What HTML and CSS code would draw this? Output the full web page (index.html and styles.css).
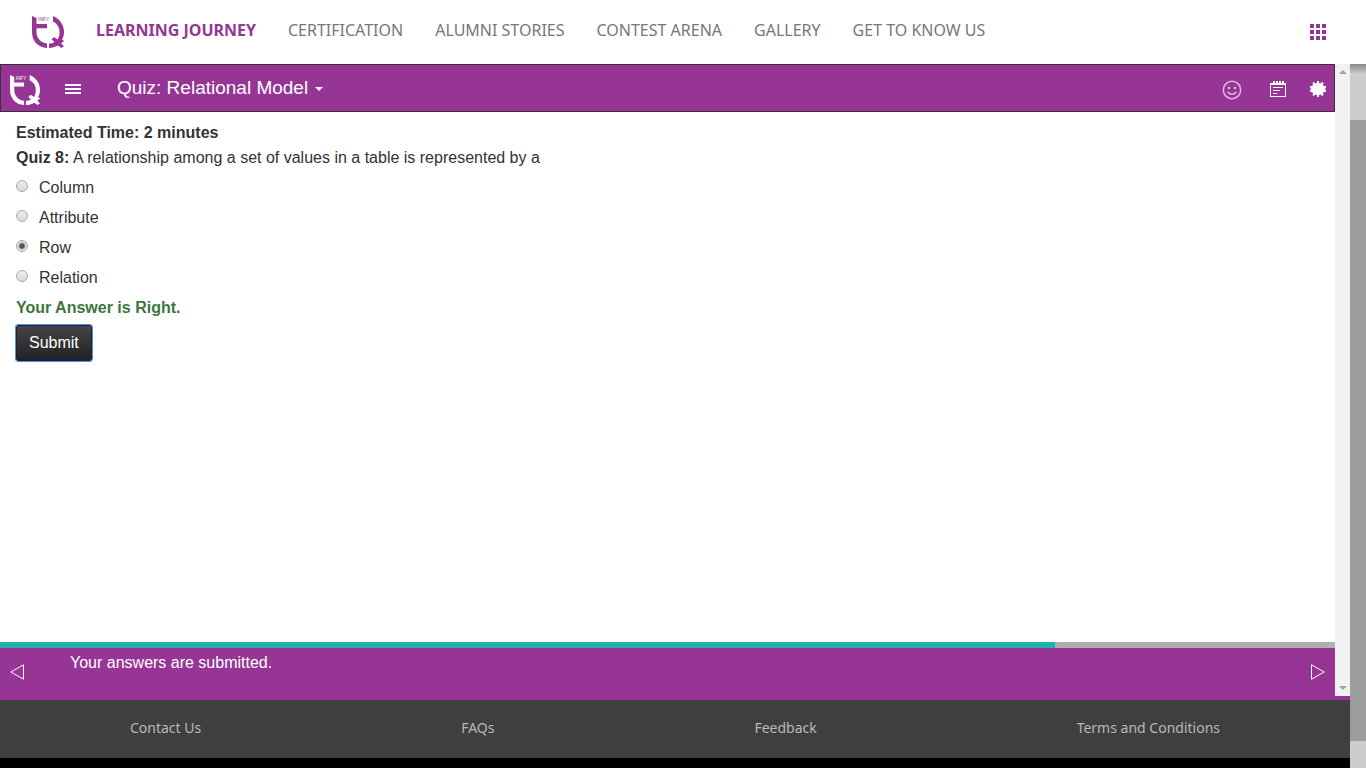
FILE: index.html
```html
<!DOCTYPE html>
<html lang="en">
<head>
<meta charset="utf-8">
<title>InfyTQ - Quiz: Relational Model</title>
<link rel="stylesheet" href="styles.css">
</head>
<body>
<svg class="symbols" aria-hidden="true">
  <symbol id="logo" viewBox="0 0 32 32">
    <path d="M0 0L4.500 2V8H15V12.300H4.500V16C4.500 22 9 27 15 27.500V32C6 31.500 0 25 0 16Z" fill="currentColor"/>
    <path d="M21 0C28 3 32 9 32 16C32 19 31.500 21 30 23.500L32 25L29 27.500L32 30L29.500 32L26 29.500C23.500 31 20 32 17 32V27.500C19 27.500 21 27 22.500 26L19.500 23.500L22 21L25.500 23.500C27 21.500 27.500 19 27.500 16C27.500 11 25 7.500 21 5.500Z" fill="currentColor"/>
    <text class="logo-text" x="6" y="5" fill="currentColor">INFY</text>
  </symbol>
</svg>
<header class="site-header">
  <a class="brand" href="#" aria-label="InfyTQ home"><svg class="logo"><use href="#logo"/></svg></a>
  <nav class="site-nav">
    <a class="active" href="#">LEARNING JOURNEY</a>
    <a href="#">CERTIFICATION</a>
    <a href="#">ALUMNI STORIES</a>
    <a href="#">CONTEST ARENA</a>
    <a href="#">GALLERY</a>
    <a href="#">GET TO KNOW US</a>
  </nav>
  <button class="icon-button apps" aria-label="Apps">
    <svg width="16" height="16" fill="currentColor"><path d="M0 0h4v4H0zM6 0h4v4H6zM12 0h4v4h-4zM0 6h4v4H0zM6 6h4v4H6zM12 6h4v4h-4zM0 12h4v4H0zM6 12h4v4H6zM12 12h4v4h-4z"/></svg>
  </button>
</header>
<div class="viewport">
  <div class="page">
    <div class="frame">
      <section class="player">
        <div class="player-bar">
          <svg class="player-logo"><use href="#logo"/></svg>
          <button class="icon-button menu" aria-label="Menu">
            <svg width="16" height="10" fill="currentColor"><path d="M0 0h16v2H0zM0 4h16v2H0zM0 8h16v2H0z"/></svg>
          </button>
          <button class="title">Quiz: Relational Model<span class="caret"></span></button>
          <div class="tools">
            <button class="icon-button smile" aria-label="Feedback">
              <svg width="20" height="20" fill="none" stroke="currentColor" stroke-width="1.500"><circle cx="10" cy="10" r="8.700"/><path d="M5.500 12Q10 16.500 14.500 12"/><circle cx="7" cy="8" r=".6"/><circle cx="13" cy="8" r=".6"/></svg>
            </button>
            <button class="icon-button" aria-label="Notes">
              <svg width="16" height="16" fill="currentColor"><path d="M0 2H16V16H0ZM1 4V15H15V4Z" fill-rule="evenodd"/><path d="M3 0h2v4H3zM6 0h2v4H6zM9 0h2v4H9zM12 0h2v4h-2zM3 6h10v1H3zM3 9h7v1H3zM3 12h4v1H3z"/></svg>
            </button>
            <button class="icon-button" aria-label="Settings">
              <svg width="16" height="16" fill="currentColor"><path d="M7 0H9V2L10.500 2.500L12 1L13.500 2L13 4L14 5H16V7L14.500 8L16 9V11H14L13 12L13.500 14L12 15L10.500 13.500L9 14V16H7V14L5.500 13.500L4 15L2.500 14L3 12L2 11H0V9L1.500 8L0 7V5H2L3 4L2.500 2L4 1L5.500 2.500L7 2Z"/></svg>
            </button>
          </div>
        </div>
        <form class="quiz">
          <p class="line"><b>Estimated Time: 2 minutes</b></p>
          <p class="line"><b>Quiz 8:</b> A relationship among a set of values in a table is represented by a</p>
          <label class="option"><input type="radio" name="answer">Column</label>
          <label class="option"><input type="radio" name="answer">Attribute</label>
          <label class="option"><input type="radio" name="answer" checked>Row</label>
          <label class="option"><input type="radio" name="answer">Relation</label>
          <p class="result">Your Answer is Right.</p>
          <button class="submit" type="button">Submit</button>
        </form>
        <div class="progress"><div class="progress-fill" style="width: 79%"></div></div>
        <div class="player-footer">
          <button class="icon-button" aria-label="Previous"><svg width="14" height="16" fill="none" stroke="currentColor"><path d="M13.500 .8V15.200L.8 8Z"/></svg></button>
          <p class="status">Your answers are submitted.</p>
          <button class="icon-button" aria-label="Next"><svg width="14" height="16" fill="none" stroke="currentColor"><path d="M.5 .8V15.200L13.200 8Z"/></svg></button>
        </div>
      </section>
      <div class="frame-scroll"><span class="arrow up"></span><span class="arrow down"></span></div>
    </div>
    <footer class="site-footer">
      <a href="#">Contact Us</a>
      <a href="#">FAQs</a>
      <a href="#">Feedback</a>
      <a href="#">Terms and Conditions</a>
    </footer>
  </div>
  <div class="page-scroll"><div class="thumb"></div></div>
</div>
</body>
</html>
```
FILE: styles.css
```css
* { box-sizing: border-box; }
body {
  margin: 0;
  height: 100vh;
  display: flex;
  flex-direction: column;
  background: #000;
  color: #333;
  font: 16px/20px "Liberation Sans", Arial, sans-serif;
}
p { margin: 0; }
a { text-decoration: none; }
button { font: inherit; cursor: pointer; }
svg { display: block; }
.symbols { display: none; }
.logo-text { font: 5px "Liberation Sans", Arial, sans-serif; }
.icon-button { padding: 0; border: 0; background: none; color: inherit; }

.site-header {
  flex: none;
  height: 64px;
  display: flex;
  align-items: center;
  padding: 0 40px 0 32px;
  background: #fff;
  color: #963596;
  box-shadow: 0 2px 8px rgba(0, 0, 0, .6);
}
.logo { width: 32px; height: 32px; color: #963596; }
.site-nav {
  flex: 1;
  display: flex;
  gap: 32px;
  margin-left: 32px;
  padding-bottom: 4px;
  font-family: "Noto Sans", sans-serif;
  font-size: 16px;
  white-space: nowrap;
}
.site-nav a { color: #777; }
.site-nav .active { color: #963596; font-weight: bold; }

.viewport { flex: 1; display: flex; min-height: 0; }
.page { flex: 1; display: flex; flex-direction: column; padding-bottom: 10px; }
.frame { flex: 1; display: flex; padding-bottom: 4px; background: #963596; }
.player { flex: 1; display: flex; flex-direction: column; background: #fff; }
.player-bar {
  height: 48px;
  display: flex;
  align-items: center;
  padding: 0 8px;
  border: 1px solid #333;
  background: #963596;
  color: #fff;
}
.player-logo { width: 32px; height: 30px; margin-top: 4px; }
.menu { margin: 2px 0 0 24px; }
.title {
  display: flex;
  align-items: center;
  gap: 7px;
  margin-left: 36px;
  padding: 0;
  border: 0;
  background: none;
  color: #fff;
  font-size: 19px;
}
.caret { border: 4px solid transparent; border-top-color: #fff; border-bottom: 0; margin-top: 2px; }
.tools { display: flex; align-items: center; gap: 24px; margin: 2px 0 0 auto; }
.smile { margin: 2px 4px 0 0; color: #dbb8db; }

.quiz { flex: 1; padding: 11px 16px; }
.line { margin-bottom: 5px; line-height: 20px; }
.option { display: flex; align-items: center; gap: 11px; height: 30px; }
.option input {
  appearance: none;
  width: 12px;
  height: 12px;
  margin: 0 0 4px;
  border: 1px solid #aaa;
  border-radius: 50%;
  background: linear-gradient(#eee, #d8d8d8);
}
.option input:checked { background: radial-gradient(circle, #555 2px, #e4e4e4 4px); }
.result { line-height: 30px; color: #3c763d; font-weight: bold; }
.submit {
  height: 36px;
  margin-top: 2px;
  padding: 0 12px;
  border: 1px solid #222;
  border-radius: 2px;
  outline: 1px solid #4d90fe;
  background: linear-gradient(#444, #222);
  color: #fff;
}

.progress { height: 6px; background: #b0b0b0; }
.progress-fill { height: 100%; background: #20b2aa; }
.player-footer {
  height: 48px;
  display: flex;
  align-items: center;
  padding: 0 10px;
  background: #963596;
  color: #fff;
}
.status { flex: 1; align-self: flex-start; margin-left: 46px; padding-top: 5px; }

.frame-scroll {
  width: 15px;
  display: flex;
  flex-direction: column;
  justify-content: space-between;
  align-items: center;
  padding: 6px 0;
  background: #f1f1f1;
}
.arrow { border: 4px solid transparent; }
.up { border-top: 0; border-bottom-color: #a3a3a3; }
.down { border-bottom: 0; border-top-color: #a3a3a3; }

.site-footer {
  height: 58px;
  display: flex;
  justify-content: space-around;
  align-items: center;
  padding-bottom: 2px;
  background: #3f3f3f;
  font-family: "Noto Sans", sans-serif;
  font-size: 14px;
}
.site-footer a { color: #b8b8b8; }
.page-scroll {
  width: 16px;
  padding: 56px 0 27px;
  background: linear-gradient(#888, #cdcdcd 10px);
}
.thumb { height: 100%; background: #9c9c9c; }
```
